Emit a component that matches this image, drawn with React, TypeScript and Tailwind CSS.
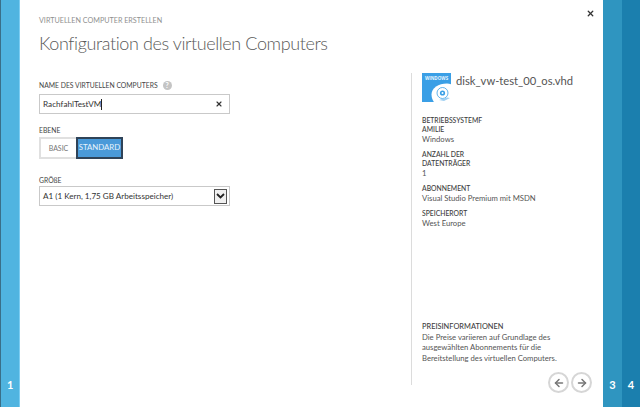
import React from "react";
import { ArrowLeft, ArrowRight, X } from "lucide-react";

const font = "font-['Lato','Open_Sans',sans-serif]";

const InfoBlock = ({ label, value }: { label: string[]; value: string }) => (
  <div>
    {label.map((l) => (
      <div key={l} className="text-[6.8px] font-medium leading-[9px] text-[#3d3d3d]">{l}</div>
    ))}
    <div className="text-[7.7px] leading-[10px] text-[#555]">{value}</div>
  </div>
);

const DiskIcon = () => (
  <svg width="29" height="29" viewBox="0 0 29 29" className="shrink-0">
    <rect width="29" height="29" fill="#3a9fe6" />
    <text x="14.5" y="6.5" textAnchor="middle" fontSize="4.5" fontWeight="700" fill="#e8f4fd" fontFamily="Open Sans, sans-serif">WINDOWS</text>
    <path d="M29 11.2c-1.3-.5-2.7-.7-4-.7C16.500 10.500 9.500 15 9.500 21.500c0 2.800.900 5.400 2.400 7.500H29z" fill="#fff" />
    <circle cx="20.500" cy="20" r="5.500" fill="none" stroke="#3a9fe6" strokeWidth="0.8" />
    <circle cx="20.500" cy="20" r="2.600" fill="#3a9fe6" />
    <circle cx="20.500" cy="20" r="1" fill="#fff" />
    <path d="M17 27l8-2.500 3 .5-6 3z" fill="#9fd0f2" />
  </svg>
);

export default function App() {
  return (
    <div className={`${font} flex h-[407px] w-[640px] overflow-hidden bg-white`}>
      {/* Left step bar */}
      <div className="flex h-full w-[20px] shrink-0 items-end border-l border-l-[#3a6f88] border-r border-r-[#7ccdf2] bg-[#50b4e0] pb-[15px] pl-[6px]">
        <span className="text-[11px] font-bold leading-[14px] text-white">1</span>
      </div>

      {/* Wizard body */}
      <div className="relative flex min-w-0 flex-1">
        <button className="absolute right-[8px] top-[9px] text-[#333]">
          <X size={9} strokeWidth={3.5} />
        </button>

        <div className="w-[391px] shrink-0 pl-[19px] pt-[15px]">
          <div className="text-[7.2px] leading-[11px] text-[#8f8f8f]">VIRTUELLEN COMPUTER ERSTELLEN</div>
          <h1 className="mt-[5px] text-[18px] font-light leading-[25px] tracking-[-0.4px] text-[#5a5a5a]">Konfiguration des virtuellen Computers</h1>

          <div className="mt-[24px] flex items-center gap-[5px]">
            <span className="text-[6.8px] leading-[11px] text-[#444]">NAME DES VIRTUELLEN COMPUTERS</span>
            <span className="flex h-[9px] w-[9px] items-center justify-center rounded-full bg-[#c4c4c4] text-[7px] font-bold leading-none text-white">?</span>
          </div>
          <div className="mt-[3px] flex h-[20px] w-[191px] items-center justify-between border border-[#c9c9c9] pl-[3px] pr-[6px] text-[8.2px] text-[#333]">
            <span className="border-r border-[#222] leading-[11px]">RachfahlTestVM</span>
            <X size={8} strokeWidth={3.5} className="text-[#333]" />
          </div>

          <div className="mt-[11px] text-[6.8px] leading-[11px] text-[#444]">EBENE</div>
          <div className="mt-[1px] flex h-[22px]">
            <div className="flex w-[37px] items-center justify-center border-2 border-r-0 border-[#e0e0e0] text-[7px] text-[#777]">BASIC</div>
            <div className="flex w-[47px] items-center justify-center border-2 border-[#2f4358] bg-[#4a9ad9] text-[7.8px] text-[#e8f3fb]">STANDARD</div>
          </div>

          <div className="mt-[16px] text-[6.8px] leading-[11px] text-[#444]">GRÖßE</div>
          <div className="flex h-[20px] w-[191px] items-center justify-between border border-[#c9c9c9] pl-[3px] pr-[2px] text-[8.1px] text-[#333]">
            <span>A1 (1 Kern, 1,75 GB Arbeitsspeicher)</span>
            <span className="flex h-[15px] w-[13px] items-center justify-center border border-[#555] bg-[#f0f0f0]">
              <svg width="9" height="6" viewBox="0 0 9 6">
                <path d="M1 1l3.500 3.500L8 1" fill="none" stroke="#222" strokeWidth="1.8" />
              </svg>
            </span>
          </div>
        </div>

        {/* Summary column */}
        <div className="mb-[22px] mt-[73px] flex w-[172px] shrink-0 flex-col border-l border-[#dcdcdc] pl-[10px] pr-[4px]">
          <div className="flex items-start gap-[5px]">
            <DiskIcon />
            <span className="whitespace-nowrap text-[11.2px] leading-[16px] text-[#555]">disk_vw-test_00_os.vhd</span>
          </div>
          <div className="mt-[14px] flex flex-col gap-[6px]">
            <InfoBlock label={["BETRIEBSSYSTEMF", "AMILIE"]} value="Windows" />
            <InfoBlock label={["ANZAHL DER", "DATENTRÄGER"]} value="1" />
            <InfoBlock label={["ABONNEMENT"]} value="Visual Studio Premium mit MSDN" />
            <InfoBlock label={["SPEICHERORT"]} value="West Europe" />
          </div>
          <div className="mt-auto pb-[22px]">
            <div className="text-[7.4px] font-medium leading-[10px] text-[#3d3d3d]">PREISINFORMATIONEN</div>
            <div className="text-[7.7px] leading-[10.300px] text-[#555]">Die Preise variieren auf Grundlage des<br />ausgewählten Abonnements für die<br />Bereitstellung des virtuellen Computers.</div>
          </div>
        </div>

        <div className="absolute bottom-[14px] right-[11px] flex gap-[2px]">
          <span className="flex h-[21px] w-[21px] items-center justify-center rounded-full border-2 border-[#d6d6d6] text-[#777]"><ArrowLeft size={12} strokeWidth={3} /></span>
          <span className="flex h-[21px] w-[21px] items-center justify-center rounded-full border-2 border-[#d6d6d6] text-[#777]"><ArrowRight size={12} strokeWidth={3} /></span>
        </div>
      </div>

      {/* Right step bars */}
      <div className="flex h-full w-[19px] shrink-0 items-end justify-center bg-[#2f95c0] pb-[15px]">
        <span className="text-[11px] font-bold leading-[14px] text-white">3</span>
      </div>
      <div className="flex h-full w-[18px] shrink-0 items-end justify-center bg-[#1b7fae] pb-[15px]">
        <span className="text-[11px] font-bold leading-[14px] text-white">4</span>
      </div>
    </div>
  );
}
